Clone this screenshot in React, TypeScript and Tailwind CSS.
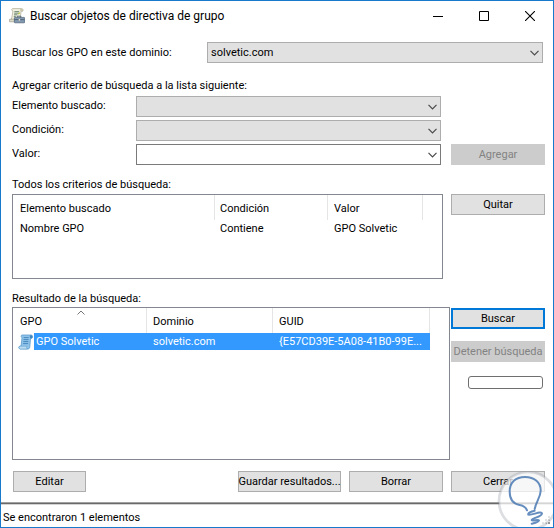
import React, { useState } from "react";
import clsx from "clsx";

type ComboProps = {
  id: string;
  options?: string[];
  editable?: boolean;
};

const Combo: React.FC<ComboProps> = ({ id, options = [""], editable = false }) => (
  <div className="relative min-w-0 flex-1">
    <select
      id={id}
      className={clsx(
        "block h-[21px] w-full appearance-none border pl-[3px] pr-5 leading-none text-black outline-none",
        editable ? "border-[#7a7a7a] bg-white" : "border-[#adadad] bg-[#e1e1e1]"
      )}
    >
      {options.map((o) => (
        <option key={o}>{o}</option>
      ))}
    </select>
    <svg
      viewBox="0 0 9 6"
      className="pointer-events-none absolute right-1 top-2 h-[6px] w-[9px]"
      fill="none"
      stroke="#4a4a4a"
      strokeWidth="1.2"
    >
      <path d="M.5 .8 4.5 4.8 8.5 .8" />
    </svg>
  </div>
);

type PushButtonProps = React.ButtonHTMLAttributes<HTMLButtonElement> & {
  primary?: boolean;
};

const PushButton: React.FC<PushButtonProps> = ({
  primary = false,
  className,
  disabled,
  children,
  ...rest
}) => (
  <button
    type="button"
    disabled={disabled}
    className={clsx(
      "flex h-[21px] items-center justify-center whitespace-nowrap",
      disabled && "bg-[#cccccc] text-[#838383]",
      !disabled && primary && "border-2 border-[#0078d7] bg-[#e1e1e1]",
      !disabled && !primary && "border border-[#adadad] bg-[#e1e1e1]",
      className
    )}
    {...rest}
  >
    {children}
  </button>
);

const ConsoleIcon = () => (
  <svg viewBox="0 0 16 16" className="h-4 w-4">
    <path
      d="M3.6 .6h9c1.6 0 2 2.3.8 2.8H12l-.8 9.3H2.2L4 3C2.4 2.8 2.2 1 3.6.6z"
      fill="#f3f1df"
      stroke="#aaa894"
      strokeWidth=".7"
    />
    <path d="M11.5 1.1c-.8.8-.5 2 .3 2.3h1.6c1-.6.8-2.4-.5-2.6z" fill="#c9c7ae" />
    <path d="M5.4 3.6h4.8M5.2 5.2h4.8M5 6.8h3.4M4.8 8.4h2" stroke="#5f7f6a" strokeWidth=".9" />
    <path d="M9.4 6.2l1.4-1.6" stroke="#b9c63c" strokeWidth="1.1" />
    <path d="M.6 11.2h5.4v2.6H.6z" fill="#dddccb" stroke="#8e8d7d" strokeWidth=".6" />
    <path d="M8.3 9.4V8.2h3.6v1.2" fill="none" stroke="#4d5d6d" strokeWidth=".9" />
    <rect x="5.4" y="9.4" width="10.2" height="5.4" rx=".5" fill="#8299b0" stroke="#4b5f74" strokeWidth=".7" />
    <path d="M5.7 11.6h9.6" stroke="#3e5063" strokeWidth=".7" />
    <path d="M9.7 11h1.4v1.6H9.7z" fill="#e3e3c4" />
  </svg>
);

const ScrollIcon = () => (
  <svg viewBox="0 0 16 16" className="h-4 w-4 shrink-0">
    <path
      d="M3.8 1h9.4c1.9.2 1.8 3.2.1 3.4h-.8L11.8 13c-.1 1.4-1 2-1.8 2H2.2c-1.8-.2-1.9-2.8 0-3h.9L4 3.8C2.9 3 2.8 1.5 3.8 1z"
      fill="#8fc3e9"
      stroke="#5a9bcb"
      strokeWidth=".8"
    />
    <path d="M12.4 1.3c-1 1-.7 2.6.2 3.1h.7c1.6-.4 1.5-2.8 0-3.2z" fill="#3f86c0" />
    <path d="M2 12.2h7c-.7.8-.5 2.2.3 2.8H2.2c-1.5-.3-1.6-2.5-.2-2.8z" fill="#bcdcf2" stroke="#5a9bcb" strokeWidth=".5" />
    <path d="M5.7 3.6h5M5.5 5.6h5M5.3 7.6h5M5.1 9.6h5" stroke="#3f80b8" strokeWidth=".9" />
  </svg>
);

const BulbMark = () => (
  <svg viewBox="0 0 168 168" className="pointer-events-none absolute bottom-0 right-0 h-14 w-14">
    <circle cx="93" cy="90" r="87" fill="#fff" fillOpacity=".72" stroke="#8c93a0" strokeOpacity=".3" strokeWidth="8" />
    <g fill="none" stroke="#3f70ae" strokeOpacity=".8" strokeWidth="6" strokeLinecap="round" strokeLinejoin="round">
      <path d="M90 118C86 107 78 104 68 102C48 98 38 82 38 62C38 34 56 18 84 18C112 18 132 34 131 60C130 80 117 92 113 114" />
      <path d="M113 119C102 121 91 126 94 131C104 134 134 118 135 128C133 139 106 140 104 147C104 151 124 144 126 148C124 154 112 156 104 158" />
    </g>
  </svg>
);

const criteria = [{ item: "Nombre GPO", condition: "Contiene", value: "GPO Solvetic" }];

const results = [
  { gpo: "GPO Solvetic", domain: "solvetic.com", guid: "{E57CD39E-5A08-41B0-99E..." },
];

const th = "relative h-[25px] border-r border-[#e5e5e5] pt-[2px] text-left font-normal";

export default function App() {
  const [selected, setSelected] = useState(0);

  return (
    <div className="relative flex min-h-screen flex-col overflow-hidden border border-[#1979ca] bg-white font-['Roboto',sans-serif] text-[11px] leading-[17px] text-black">
      <header className="flex h-[30px] items-center pl-2">
        <ConsoleIcon />
        <h1 className="ml-[5px] flex-1 text-[12px]">Buscar objetos de directiva de grupo</h1>
        <button type="button" aria-label="Minimizar" className="flex h-7 w-[46px] items-center justify-center">
          <svg viewBox="0 0 10 10" className="h-[10px] w-[10px]" stroke="#000">
            <path d="M0 5.5h10" />
          </svg>
        </button>
        <button type="button" aria-label="Maximizar" className="flex h-7 w-[46px] items-center justify-center">
          <svg viewBox="0 0 10 10" className="h-[10px] w-[10px]" fill="none" stroke="#000">
            <path d="M.5 .5h9v9h-9z" />
          </svg>
        </button>
        <button type="button" aria-label="Cerrar ventana" className="flex h-7 w-[46px] items-center justify-center">
          <svg viewBox="0 0 10 10" className="h-[10px] w-[10px]" stroke="#000" strokeWidth="1.1">
            <path d="M0 0 10 10M10 0 0 10" />
          </svg>
        </button>
      </header>

      <main className="flex flex-1 flex-col pl-[11px] pr-2">
        <div className="mt-[11px] flex items-center pr-[2px]">
          <label htmlFor="domain" className="w-[195px]">
            Buscar los GPO en este dominio:
          </label>
          <Combo id="domain" options={["solvetic.com"]} />
        </div>

        <p className="mt-[14px]">Agregar criterio de búsqueda a la lista siguiente:</p>

        <div className="mt-[2px] flex items-end gap-[10px]">
          <div className="flex flex-1 flex-col gap-[3px]">
            <div className="flex items-start">
              <label htmlFor="item" className="w-[124px] pt-px">
                Elemento buscado:
              </label>
              <Combo id="item" />
            </div>
            <div className="flex items-start">
              <label htmlFor="condition" className="w-[124px] pt-px">
                Condición:
              </label>
              <Combo id="condition" />
            </div>
            <div className="flex items-start">
              <label htmlFor="value" className="w-[124px] pt-px">
                Valor:
              </label>
              <Combo id="value" editable />
            </div>
          </div>
          <PushButton disabled className="w-[94px]">
            Agregar
          </PushButton>
        </div>

        <h2 className="mt-[11px]">Todos los criterios de búsqueda:</h2>
        <div className="mt-px flex items-start gap-2">
          <div className="h-[85px] min-w-0 flex-1 border border-[#828790]">
            <table className="w-[410px] table-fixed border-separate border-spacing-0">
              <thead>
                <tr>
                  <th className={clsx(th, "w-[202px] pl-[7px]")}>Elemento buscado</th>
                  <th className={clsx(th, "w-[113px] pl-[5px]")}>Condición</th>
                  <th className={clsx(th, "w-[95px] pl-[6px]")}>Valor</th>
                </tr>
              </thead>
              <tbody>
                {criteria.map((c) => (
                  <tr key={c.item}>
                    <td className="h-[17px] pl-[7px]">{c.item}</td>
                    <td className="pl-[5px]">{c.condition}</td>
                    <td className="pl-[6px]">{c.value}</td>
                  </tr>
                ))}
              </tbody>
            </table>
          </div>
          <PushButton className="w-[94px]">Quitar</PushButton>
        </div>

        <h2 className="mt-[11px]">Resultado de la búsqueda:</h2>
        <div className="flex flex-1 items-stretch gap-px">
          <div className="min-h-[153px] min-w-0 flex-1 border border-[#828790]">
            <table className="w-[417px] table-fixed border-separate border-spacing-0">
              <thead>
                <tr>
                  <th className={clsx(th, "w-[134px] pl-[7px]")}>
                    GPO
                    <svg
                      viewBox="0 0 8 5"
                      className="absolute left-[64px] top-[2px] h-[5px] w-2"
                      fill="none"
                      stroke="#666"
                      strokeWidth=".9"
                    >
                      <path d="M.5 4.5 4 1 7.5 4.5" />
                    </svg>
                  </th>
                  <th className={clsx(th, "w-[126px] pl-[6px]")}>Dominio</th>
                  <th className={clsx(th, "w-[157px] pl-[6px]")}>GUID</th>
                </tr>
              </thead>
              <tbody>
                {results.map((r, i) => {
                  const fill = selected === i && "bg-[#3399ff] text-white";
                  return (
                    <tr key={r.guid} onClick={() => setSelected(i)}>
                      <td className="p-0">
                        <div className="flex h-[17px] items-center pl-[5px]">
                          <ScrollIcon />
                          <span className={clsx("h-[17px] flex-1 pl-[2px]", fill)}>{r.gpo}</span>
                        </div>
                      </td>
                      <td className={clsx("pl-[6px]", fill)}>{r.domain}</td>
                      <td className={clsx("whitespace-nowrap pl-[6px]", fill)}>{r.guid}</td>
                    </tr>
                  );
                })}
              </tbody>
            </table>
          </div>
          <div className="flex w-[94px] flex-col pt-px">
            <PushButton primary>Buscar</PushButton>
            <PushButton disabled className="mt-3">
              Detener búsqueda
            </PushButton>
            <div
              role="progressbar"
              aria-label="Progreso"
              className="ml-[17px] mr-[2px] mt-[14px] h-[13px] rounded-[3px] border border-[#6f6f6f]"
            />
          </div>
        </div>

        <div className="mb-[10px] mt-[11px] flex gap-2">
          <PushButton className="ml-px mr-auto w-[73px]">Editar</PushButton>
          <PushButton className="w-[103px]">Guardar resultados...</PushButton>
          <PushButton className="w-[94px]">Borrar</PushButton>
          <PushButton className="w-[94px]">Cerrar</PushButton>
        </div>
      </main>

      <footer className="relative flex h-[25px] items-center border-t border-[#a0a0a0] pl-[2px] pt-[5px] shadow-[inset_0_1px_#696969,inset_0_2px_#d4d4d4]">
        Se encontraron 1 elementos
        <svg viewBox="0 0 9 9" className="absolute bottom-[2px] right-[2px] h-[9px] w-[9px]" fill="#9a9a9a">
          <path d="M6 0h2v2H6zM3 3h2v2H3zM6 3h2v2H6zM0 6h2v2H0zM3 6h2v2H3zM6 6h2v2H6z" />
        </svg>
      </footer>
      <BulbMark />
    </div>
  );
}
